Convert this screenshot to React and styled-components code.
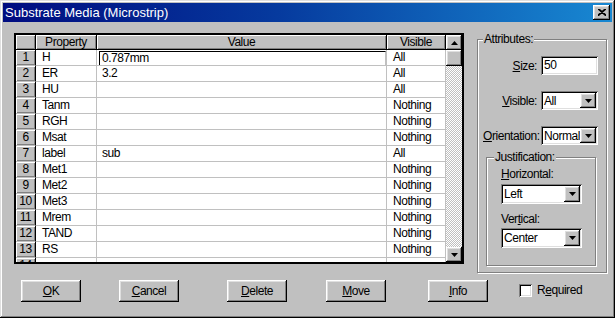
import React from 'react'
import styled, { createGlobalStyle } from 'styled-components'

const FONT = '"Liberation Sans", Arial, sans-serif'

const raised = `box-shadow: inset -1px -1px #000, inset 1px 1px #fff, inset -2px -2px #808080, inset 2px 2px #dfdfdf;`
const sunken = `box-shadow: inset 1px 1px #808080, inset -1px -1px #fff, inset 2px 2px #000, inset -2px -2px #dfdfdf;`

const GlobalStyle = createGlobalStyle`
  html, body { margin: 0; padding: 0; background: #c0c0c0; }
  body { font-family: ${FONT}; font-size: 12px; letter-spacing: -0.45px; color: #000; }
  * { box-sizing: border-box; }
`

const Window = styled.div`
  width: 615px;
  height: 318px;
  padding: 3px;
  background: #c0c0c0;
  box-shadow: inset -1px -1px #000, inset 1px 1px #dfdfdf, inset -2px -2px #808080, inset 2px 2px #fff;
  display: flex;
  flex-direction: column;
`

const TitleBar = styled.div`
  height: 19px;
  padding: 0 2px;
  display: flex;
  align-items: center;
  justify-content: space-between;
  background: linear-gradient(90deg, #000c80 0%, #063a9e 45%, #1888d2 100%);
  color: #fff;
  font-size: 13px;
  letter-spacing: 0;
`

const CloseButton = styled.div`
  width: 17px;
  height: 15px;
  background: #c0c0c0;
  ${raised}
  display: flex;
  align-items: center;
  justify-content: center;
`

const Body = styled.div`
  height: 258px;
  padding: 11px 0 0 11px;
  display: flex;
  align-items: flex-start;
  gap: 13px;
`

const Grid = styled.div`
  width: 450px;
  height: 231px;
  border: 2px solid #000;
  display: flex;
  overflow: hidden;
  background: #fff;
`

const Table = styled.div`
  width: 430px;
  display: grid;
  grid-template-columns: 20px 61px 290px 59px;
  grid-template-rows: 15px;
  grid-auto-rows: 16px;
  align-content: start;
`

const HeaderCell = styled.div`
  background: #c0c0c0;
  box-shadow: inset 1px 1px #fff, inset -1px -1px #808080;
  border-right: 1px solid #000;
  border-bottom: 1px solid #000;
  text-align: center;
  line-height: 14px;
  white-space: nowrap;
`

const RowHead = styled.div`
  background: #c0c0c0;
  box-shadow: inset 1px 1px #fff, inset -1px -1px #808080;
  border-right: 1px solid #000;
  border-bottom: 1px solid #c0c0c0;
  text-align: center;
  line-height: 15px;
`

const Cell = styled.div`
  background: #fff;
  border-right: 1px solid #c0c0c0;
  border-bottom: 1px solid #c0c0c0;
  padding-left: ${p => p.$pad ?? 6}px;
  line-height: 15px;
  white-space: nowrap;
  overflow: hidden;
`

const EditBox = styled.div`
  height: 14px;
  margin: 1px 0 0 2px;
  border-top: 1px solid #000;
  border-left: 1px solid #000;
  border-right: 1px solid #c0c0c0;
  padding-left: 2px;
  line-height: 13px;
`

const ScrollBar = styled.div`
  width: 16px;
  display: flex;
  flex-direction: column;
`

const ScrollButton = styled.div`
  height: ${p => p.$h}px;
  background: #c0c0c0;
  ${raised}
  display: flex;
  align-items: center;
  justify-content: center;
`

const Track = styled.div`
  flex: 1;
  background: repeating-conic-gradient(#c0c0c0 0 25%, #fff 0 50%) 0 0 / 2px 2px;
`

const Group = styled.fieldset`
  margin: ${p => p.$margin};
  padding: 0;
  width: ${p => p.$w}px;
  height: ${p => p.$h}px;
  border: 1px solid #808080;
  box-shadow: 1px 1px 0 #fff, inset 1px 1px 0 #fff;
  min-width: 0;
`

const Legend = styled.legend`
  margin-left: ${p => p.$indent}px;
  padding: 0 1px;
  line-height: 15px;
  background: #c0c0c0;
`

const GroupBody = styled.div`
  padding: ${p => p.$pad};
`

const FieldGrid = styled.div`
  display: grid;
  grid-template-columns: 54px 57px;
  column-gap: 4px;
  row-gap: 16px;
  padding-top: 9px;
  align-items: center;
`

const FieldLabel = styled.label`
  text-align: right;
  white-space: nowrap;
`

const TextInput = styled.div`
  height: 19px;
  background: #fff;
  ${sunken}
  padding: 0 3px;
  line-height: 19px;
`

const ComboBox = styled.div`
  width: ${p => p.$w}px;
  height: ${p => p.$h}px;
  background: #fff;
  ${sunken}
  padding: 2px;
  display: flex;
  align-items: stretch;
`

const ComboText = styled.div`
  flex: 1;
  padding-left: 1px;
  display: flex;
  align-items: center;
  white-space: nowrap;
  overflow: hidden;
`

const DropButton = styled.div`
  width: 16px;
  flex: none;
  background: #c0c0c0;
  ${raised}
  display: flex;
  align-items: center;
  justify-content: center;
`

const SubLabel = styled.div`
  line-height: 15px;
  margin: ${p => p.$margin};
`

const ButtonRow = styled.div`
  height: 22px;
  display: flex;
  align-items: center;
`

const PushButton = styled.div`
  width: 60px;
  height: 22px;
  margin-left: ${p => p.$left}px;
  background: #c0c0c0;
  ${raised}
  display: flex;
  align-items: center;
  justify-content: center;
`

const CheckBox = styled.div`
  width: 13px;
  height: 13px;
  margin: 0 0 2px 31px;
  background: #fff;
  ${sunken}
`

const CheckLabel = styled.span`
  margin: 0 0 2px 5px;
`

const Arrow = ({ up }) => (
  <svg width="7" height="4" viewBox="0 0 7 4">
    <path d={up ? 'M3.5 0 L7 4 L0 4 Z' : 'M0 0 L7 0 L3.5 4 Z'} fill="#000" />
  </svg>
)

const Key = ({ text, at }) => (
  <span>
    {text.slice(0, at)}
    <u>{text[at]}</u>
    {text.slice(at + 1)}
  </span>
)

const Combo = ({ value, w, h }) => (
  <ComboBox $w={w} $h={h}>
    <ComboText>{value}</ComboText>
    <DropButton>
      <Arrow />
    </DropButton>
  </ComboBox>
)

const rows = [
  ['H', '0.787mm', 'All'],
  ['ER', '3.2', 'All'],
  ['HU', '', 'All'],
  ['Tanm', '', 'Nothing'],
  ['RGH', '', 'Nothing'],
  ['Msat', '', 'Nothing'],
  ['label', 'sub', 'All'],
  ['Met1', '', 'Nothing'],
  ['Met2', '', 'Nothing'],
  ['Met3', '', 'Nothing'],
  ['Mrem', '', 'Nothing'],
  ['TAND', '', 'Nothing'],
  ['RS', '', 'Nothing'],
  ['', '', ''],
]

const buttons = [
  { text: 'OK', left: 18 },
  { text: 'Cancel', left: 38 },
  { text: 'Delete', left: 48 },
  { text: 'Move', left: 39 },
  { text: 'Info', left: 42 },
]

export default function App() {
  return (
    <>
      <GlobalStyle />
      <Window>
        <TitleBar>
          <span>Substrate Media (Microstrip)</span>
          <CloseButton>
            <svg width="8" height="7" viewBox="0 0 8 7">
              <path d="M0 0 L8 7 M8 0 L0 7 M1 0 L8 6 M7 0 L0 6" stroke="#000" strokeWidth="1.2" />
            </svg>
          </CloseButton>
        </TitleBar>

        <Body>
          <Grid>
            <Table>
              <HeaderCell />
              <HeaderCell>Property</HeaderCell>
              <HeaderCell>Value</HeaderCell>
              <HeaderCell>Visible</HeaderCell>
              {rows.map(([prop, value, vis], i) => (
                <React.Fragment key={i}>
                  <RowHead>{i + 1}</RowHead>
                  <Cell>{prop}</Cell>
                  {i === 0 ? (
                    <Cell $pad={0}>
                      <EditBox>{value}</EditBox>
                    </Cell>
                  ) : (
                    <Cell $pad={5}>{value}</Cell>
                  )}
                  <Cell>{vis}</Cell>
                </React.Fragment>
              ))}
            </Table>
            <ScrollBar>
              <ScrollButton $h={15}>
                <Arrow up />
              </ScrollButton>
              <ScrollButton $h={16} />
              <Track />
              <ScrollButton $h={15}>
                <Arrow />
              </ScrollButton>
            </ScrollBar>
          </Grid>

          <Group $margin="-1px 0 0 0" $w={130} $h={241}>
            <Legend $indent={5}>Attributes:</Legend>
            <GroupBody $pad="0 8px 0 5px">
              <FieldGrid>
                <FieldLabel><Key text="Size:" at={0} /></FieldLabel>
                <TextInput>50</TextInput>
                <FieldLabel><Key text="Visible:" at={0} /></FieldLabel>
                <Combo value="All" w={57} h={19} />
                <FieldLabel><Key text="Orientation:" at={0} /></FieldLabel>
                <Combo value="Normal" w={57} h={19} />
              </FieldGrid>
              <Group $margin="5px 0 0 3px" $w={110} $h={116}>
                <Legend $indent={7}>Justification:</Legend>
                <GroupBody $pad="0 0 0 14px">
                  <SubLabel $margin="2px 0 2px 0"><Key text="Horizontal:" at={0} /></SubLabel>
                  <Combo value="Left" w={81} h={20} />
                  <SubLabel $margin="8px 0 1px 0"><Key text="Vertical:" at={3} /></SubLabel>
                  <Combo value="Center" w={81} h={20} />
                </GroupBody>
              </Group>
            </GroupBody>
          </Group>
        </Body>

        <ButtonRow>
          {buttons.map(b => (
            <PushButton key={b.text} $left={b.left}>
              <Key text={b.text} at={0} />
            </PushButton>
          ))}
          <CheckBox />
          <CheckLabel><Key text="Required" at={1} /></CheckLabel>
        </ButtonRow>
      </Window>
    </>
  )
}
